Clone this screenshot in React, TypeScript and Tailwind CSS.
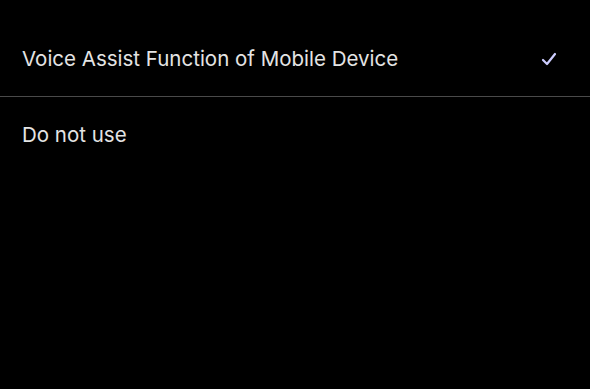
export default function App() {
  return (
    <div className="h-[389px] w-[590px] bg-black font-['Inter',sans-serif] text-[#e4e4e4]">
      <div className="flex h-[96px] items-center justify-between pl-[22px] pr-[33px] pt-[22px]">
        <span className="text-[20.5px]">Voice Assist Function of Mobile Device</span>
        <svg className="h-[14px] w-[16px]" viewBox="0 0 16 14" fill="none" stroke="#cdcdff" strokeWidth="2.2" strokeLinecap="round" strokeLinejoin="round">
          <path d="M2 8l4 4 8-10" />
        </svg>
      </div>
      <div className="h-px bg-[#4a4a4a]" />
      <div className="flex h-[76px] items-center pl-[22px]">
        <span className="text-[20.5px]">Do not use</span>
      </div>
    </div>
  );
}
